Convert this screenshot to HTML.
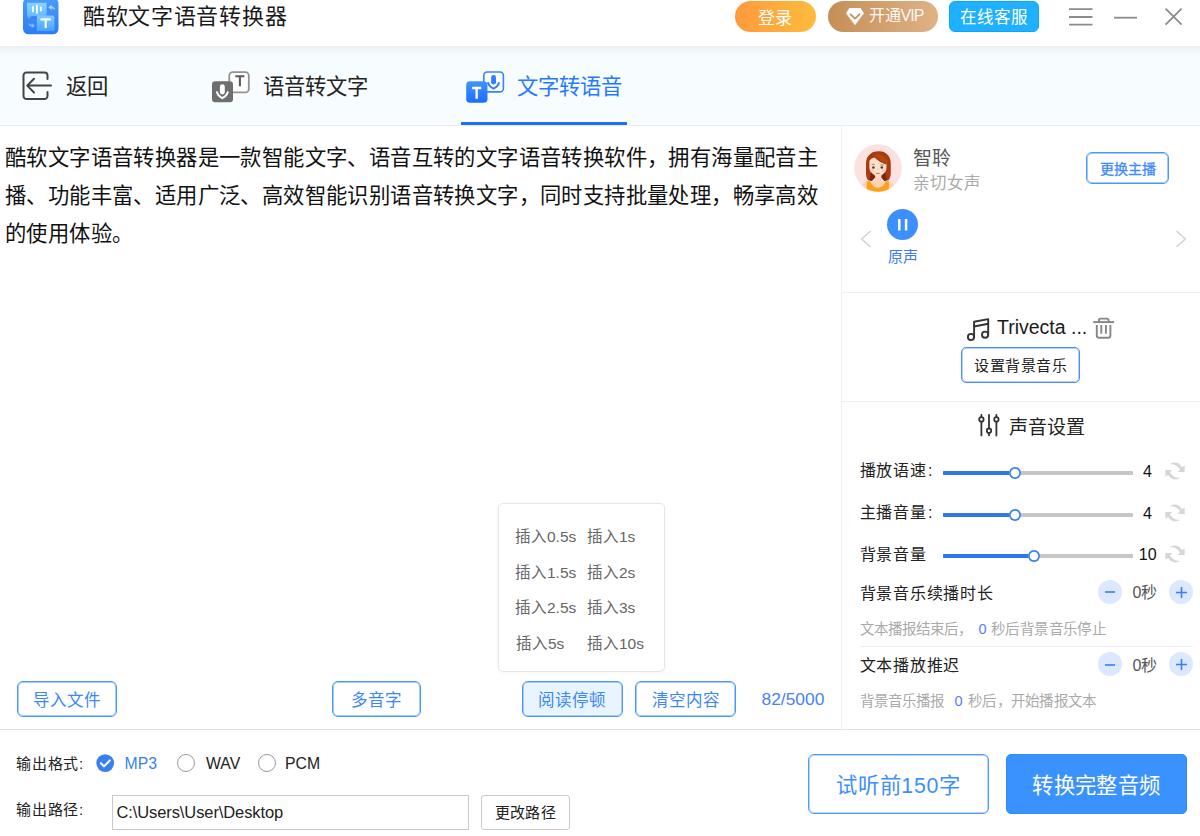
<!DOCTYPE html>
<html lang="zh-CN">
<head>
<meta charset="utf-8">
<title>酷软文字语音转换器</title>
<style>
*{box-sizing:border-box;margin:0;padding:0}
html,body{width:1200px;height:836px;overflow:hidden;background:#fff}
body{position:relative;font-family:"Liberation Sans",sans-serif;color:#222;-webkit-font-smoothing:antialiased}
.a{position:absolute;white-space:nowrap}
.c{display:flex;align-items:center;justify-content:center}
svg{position:absolute;overflow:visible}
/* title bar */
#titlebar{left:0;top:0;width:1200px;height:46px;background:#fff}
#title{left:83px;top:5px;font-size:22px;line-height:24px;letter-spacing:.7px;color:#1a1a1a}
.pill{top:1px;height:31px;border-radius:16px;color:#fff;font-size:17px}
#login{left:735px;width:81px;padding:0 2px 1px 0;background:linear-gradient(90deg,#ff9a3c,#ffbb3c)}
#vip{left:828px;width:110px;background:linear-gradient(90deg,#c58e56,#dfb285)}
#kefu{left:949px;top:1px;width:90px;height:31px;border-radius:6px;background:#1fb1ff;border:1px solid #06a7ff;color:#fff;font-size:16.5px;padding-bottom:2px}
/* tab bar */
#tabbar{left:0;top:46px;width:1200px;height:80px;background:#f7fcfe;border-bottom:1px solid #e8eff3}
#tabshadow{left:0;top:46px;width:1200px;height:10px;background:linear-gradient(180deg,#e9f0f3 0,#eef4f7 20%,#f3f8fb 50%,#f7fcfe 100%)}
.tab{font-size:21.33px;line-height:24px;top:75px;color:#222}
#underline{left:461px;top:122px;width:166px;height:3px;background:#1d6fff}
/* dividers */
#vdiv{left:841px;top:126px;width:1px;height:603px;background:#e9eff4}
.hdiv{height:1px;background:#e9eff4}

/* main text */
#maintext{left:5px;top:139px;width:835px;font-size:21.33px;line-height:38px;color:#111;white-space:nowrap;letter-spacing:.4px}
#popup{left:498px;top:503px;width:167px;height:169px;border:1px solid #e6e6e6;border-radius:5px;background:#fff;box-shadow:0 1px 4px rgba(0,0,0,.04)}
.pi{font-size:15.5px;line-height:20px;color:#666}
.obtn{top:681px;height:36px;border:1px solid #4a96ff;box-shadow:inset 0 0 0 1px rgba(74,150,255,.5);border-radius:6px;background:#fff;color:#3b87fa;font-size:16.5px}
#count{left:761.5px;top:689px;font-size:17.4px;line-height:20px;color:#4a82f0}
#hbot{left:0;top:729px;width:1200px;background:#dfe3e7}

/* right panel */
#vname{left:913px;top:147.5px;font-size:19px;line-height:22px;color:#555}
#vdesc{left:913px;top:173px;font-size:16.5px;line-height:20px;color:#aaa}
#chg{left:1086px;top:152px;width:83px;height:32px;border:1px solid #4a95ff;box-shadow:inset 0 0 0 1px rgba(74,149,255,.5);border-radius:6px;color:#3d8bff;font-size:14px;-webkit-text-stroke:.3px #3d8bff;background:#fff;padding-bottom:1px}
#pause{left:887px;top:209px;width:31px;height:31px;border-radius:50%;background:#3d8eff}
#orig{left:887px;top:247px;width:31px;text-align:center;font-size:15px;line-height:20px;color:#3a78f5}
#mname{left:997px;top:315px;font-size:19.5px;line-height:24px;color:#1a1a1a}
#setbgm{left:961px;top:347px;width:119px;height:36px;border:1px solid #4a8cff;box-shadow:inset 0 0 0 1px rgba(74,140,255,.4);border-radius:5px;background:#fff;color:#222;font-size:15px;letter-spacing:.5px;padding:0 0 2px .5px}
#stitle{left:1008.5px;top:416.5px;font-size:19px;line-height:22px;color:#222}
.rl{left:859.5px;font-size:16px;line-height:20px;letter-spacing:.75px;color:#222}
.trk{left:943px;width:190px;height:4px;border-radius:1px;background:#c6c6c6}
.trkb{left:943px;height:4px;border-radius:1px;background:#2f76ea}
.knob{width:12px;height:12px;border-radius:50%;background:#fff;box-shadow:inset 0 0 0 1.700px #3a7ff0}
.val{font-size:16px;line-height:20px;color:#111}
.circ{width:24px;height:24px;border-radius:50%;background:#dbe8ff}
.sec{left:1132.5px;font-size:16px;line-height:20px;color:#555}
.hint{left:859.5px;font-size:14.5px;line-height:18px;color:#aaa}
.hint b{font-weight:normal;color:#5b7cff}

/* bottom */
.bl{left:16px;font-size:15px;line-height:20px;letter-spacing:.75px;color:#222}
.rad{width:18px;height:18px;border-radius:50%;border:1.500px solid #9a9a9a;background:#fff}
.rt{font-size:15.800px;line-height:20px;color:#222}
#path{left:112px;top:794.500px;width:357px;height:35px;border:1px solid #c9c9c9;background:#fff}
#pathtxt{left:116.500px;top:801.500px;font-size:16.500px;letter-spacing:-.1px;line-height:20px;color:#222}
#chgpath{left:481px;top:794.500px;width:89px;height:35px;border:1px solid #ccc;border-radius:3px;background:#fff;font-size:15px;letter-spacing:.45px;color:#222;padding:0 0 2px 0}
#try{left:808px;top:753.500px;width:181px;height:60px;border:1px solid #4c9aff;box-shadow:inset 0 0 0 1px rgba(76,154,255,.4);border-radius:6px;background:#fff;color:#3d8eff;font-size:21.330px;letter-spacing:.65px;padding-bottom:1px}
#conv{left:1006px;top:753.500px;width:181px;height:60px;border-radius:5px;background:#3a92ff;border:1px solid #2c8bff;color:#fff;font-size:21.330px;letter-spacing:.4px;padding-bottom:1px}
</style>
</head>
<body>
<!-- ===== TITLE BAR ===== -->
<div id="titlebar" class="a"></div>
<svg id="logo" style="left:23px;top:-2px" width="36" height="37" viewBox="0 0 36 37">
  <defs>
    <linearGradient id="lg1" x1="0" y1="0" x2="0" y2="1"><stop offset="0" stop-color="#4a9cfc"/><stop offset="1" stop-color="#2f7af8"/></linearGradient>
    <linearGradient id="lg2" x1="0" y1="0" x2="0" y2="1"><stop offset="0" stop-color="#8ad4ff"/><stop offset="1" stop-color="#5cb4fd"/></linearGradient>
    <linearGradient id="lg3" x1="0" y1="0" x2="0" y2="1"><stop offset="0" stop-color="#7fcbff"/><stop offset="1" stop-color="#4aa3fc"/></linearGradient>
  </defs>
  <rect x="0" y="0" width="35.5" height="36.3" rx="5.5" fill="url(#lg1)"/>
  <path d="M4 4.700h19.600v13.600H8l-2.800 2.600-.2-2.600H4z" fill="url(#lg2)"/>
  <rect x="9" y="8" width="1.8" height="6.4" rx=".9" fill="#fff"/>
  <rect x="13" y="6.6" width="1.8" height="9.4" rx=".9" fill="#fff"/>
  <rect x="17" y="8.4" width="1.8" height="5" rx=".9" fill="#fff"/>
  <rect x="13.8" y="17.4" width="17.6" height="15.6" rx="1.6" fill="url(#lg3)"/>
  <path d="M18.300 21.400h8.800M22.700 21.400v7.900" stroke="#fff" stroke-width="2.100" fill="none" stroke-linecap="round"/>
  <path d="M25.300 9.300l3.300-2.500v1.600c2.100 .2 3.300 1.500 3.500 3.700-1-1.200-2-1.700-3.500-1.700v1.500z" fill="#a5d8ff"/>
  <path d="M12 27.700l-3.300 2.500v-1.600c-2.100-.2-3.300-1.500-3.500-3.700 1 1.200 2 1.700 3.500 1.700v-1.500z" fill="#7cc0ff"/><path d="M7.600 18.300h6.200v3.400z" fill="#2f74ea" opacity=".55"/>
</svg>
<div id="title" class="a">酷软文字语音转换器</div>
<div id="login" class="a c pill">登录</div>
<div id="vip" class="a pill"></div>
<svg style="left:845.5px;top:7.8px" width="18" height="17.2" viewBox="0 0 18 17.2"><path d="M3.4 0h11.2L18 5.300 9 17.200 0 5.300z" fill="#fff"/><path d="M4.600 6.300l4.400 4.400 4.400-4.400" fill="none" stroke="#c9925b" stroke-width="1.800" stroke-linecap="round" stroke-linejoin="round"/></svg>
<div class="a" style="left:868.5px;top:0;height:31px;line-height:31px;font-size:16px;color:#fff;opacity:.92">开通<span style="letter-spacing:-.9px">VIP</span></div>
<div id="kefu" class="a c">在线客服</div>
<svg style="left:1069px;top:8px" width="24" height="18" viewBox="0 0 24 18"><path d="M0 1.200h23.500M0 9h23.500M0 16.700h23.500" stroke="#8c8c8c" stroke-width="1.800"/></svg>
<svg style="left:1114px;top:16px" width="23" height="3" viewBox="0 0 23 3"><path d="M0 1.700h23" stroke="#8c8c8c" stroke-width="1.800"/></svg>
<svg style="left:1165px;top:8px" width="17" height="17" viewBox="0 0 17 17"><path d="M.6.600l16 16M16.600.600l-16 16" stroke="#8c8c8c" stroke-width="1.800"/></svg>

<!-- ===== TAB BAR ===== -->
<div id="tabbar" class="a"></div>
<div id="tabshadow" class="a"></div>
<svg style="left:22px;top:71px" width="31" height="30" viewBox="0 0 31 30"><path d="M25.500 8V4.500a3 3 0 0 0-3-3H4.500a3 3 0 0 0-3 3v20.500a3 3 0 0 0 3 3h18a3 3 0 0 0 3-3V21" fill="none" stroke="#444" stroke-width="2" stroke-linecap="round"/><path d="M29 14.600H5.500M12 7.700L5.200 14.600 12 21.500" fill="none" stroke="#444" stroke-width="2" stroke-linecap="round" stroke-linejoin="round"/></svg>
<div class="a tab" style="left:66px">返回</div>
<!-- speech->text icon -->
<svg style="left:211px;top:70px" width="40" height="34" viewBox="0 0 40 34">
  <rect x="18.300" y="2.100" width="19.500" height="20.300" rx="3.400" fill="#fff" stroke="#939393" stroke-width="1.800"/>
  <path d="M24.300 6.200h9.100M28.900 6.200v10.100" stroke="#5a5a5a" stroke-width="2.100" fill="none"/>
  <rect x="1" y="11.300" width="21" height="21" rx="3.200" fill="#6e6e6e"/>
  <rect x="8.900" y="14.300" width="4.900" height="10.200" rx="2.450" fill="#fff"/>
  <path d="M5.900 22.300Q7.200 26.300 11.350 28.200Q15.500 26.300 16.800 22.300" fill="none" stroke="#fff" stroke-width="2" stroke-linecap="round" stroke-linejoin="round"/>
</svg>
<div class="a tab" style="left:263px">语音转文字</div>
<!-- text->speech icon (active) -->
<svg style="left:465px;top:70px" width="40" height="34" viewBox="0 0 40 34">
  <defs><linearGradient id="tg" x1="0" y1="0" x2="0" y2="1"><stop offset="0" stop-color="#4593ff"/><stop offset="1" stop-color="#1c6dff"/></linearGradient></defs>
  <rect x="18.800" y="2" width="19.600" height="19.900" rx="3.400" fill="#fff" stroke="#3683ff" stroke-width="1.600"/>
  <rect x="26.100" y="5" width="4.900" height="9.600" rx="2.450" fill="#2f80ff"/>
  <path d="M23.100 13Q24.400 16.800 28.500 18.600Q32.600 16.800 33.900 13" fill="none" stroke="#2f7dff" stroke-width="2" stroke-linecap="round" stroke-linejoin="round"/>
  <rect x="1.200" y="11.200" width="21.300" height="21.600" rx="3.800" fill="url(#tg)"/>
  <path d="M7.100 18h9.100M11.650 18v10.700" stroke="#fff" stroke-width="2.400" fill="none"/>
</svg>
<div class="a tab" style="left:517px;color:#2878ff">文字转语音</div>
<div id="underline" class="a"></div>

<!-- ===== MAIN ===== -->
<div id="vdiv" class="a"></div>

<div id="maintext" class="a">酷软文字语音转换器是一款智能文字、语音互转的文字语音转换软件，拥有海量配音主<br>播、功能丰富、适用广泛、高效智能识别语音转换文字，同时支持批量处理，畅享高效<br>的使用体验。</div>
<div id="popup" class="a"></div>
<div class="a pi" style="left:515px;top:527px">插入0.5s</div><div class="a pi" style="left:587px;top:527px">插入1s</div>
<div class="a pi" style="left:515px;top:562.5px">插入1.5s</div><div class="a pi" style="left:587px;top:562.5px">插入2s</div>
<div class="a pi" style="left:515px;top:598px">插入2.5s</div><div class="a pi" style="left:587px;top:598px">插入3s</div>
<div class="a pi" style="left:516px;top:633.5px">插入5s</div><div class="a pi" style="left:587px;top:633.5px">插入10s</div>
<div class="a c obtn" style="left:17px;width:100px">导入文件</div>
<div class="a c obtn" style="left:332px;width:89px">多音字</div>
<div class="a c obtn" style="left:522px;width:101px;background:#e8f4ff;box-shadow:inset 0 0 0 1px rgba(74,150,255,.5),inset 0 0 0 2px #f4faff;padding-right:1px">阅读停顿</div>
<div class="a c obtn" style="left:635px;width:101px">清空内容</div>
<div id="count" class="a">82/5000</div>
<div id="hbot" class="a hdiv"></div>

<!-- voice card -->
<svg id="avatar" style="left:853.500px;top:143.500px" width="48" height="48" viewBox="0 0 48 48">
  <defs><clipPath id="avc"><circle cx="24" cy="24" r="23.800"/></clipPath></defs>
  <circle cx="24" cy="24" r="23.800" fill="#fde1e1"/>
  <g clip-path="url(#avc)">
    <path d="M7.500 44c.5-4 3-6.300 7-6.800h19c4 .5 6.500 2.800 7 6.800l1 5h-35z" fill="#fbd3b0"/>
    <path d="M24.600 7.200c-7.600 0-12.600 4.800-12.600 12.600v9.200c0 3 .6 5.300 2 7.200l3.200 .6 2.800-3h8.400l2.800 3 3.200-.6c1.600-1.900 2.400-4.200 2.400-7.200v-9.200c0-7.800-4.600-12.600-12.200-12.600z" fill="#a83b11"/>
    <path d="M17.200 27.500l-1.800 8.700 2.600 .7 3.400-4zM31 27.500l1.800 8.700-2.600 .7-3.400-4z" fill="#7c250b"/>
    <path d="M21.200 30h6.200v8c0 1.800-1.400 3-3.100 3s-3.100-1.200-3.100-3z" fill="#fbd5b8"/>
    <path d="M15.400 17.500c0-2.300 3.400-4.300 8.600-4.300 4.800 0 8.500 2 8.500 4.300v6.300c0 2.700-1.500 4.800-3.700 6.500l-3 2.100c-1.100 .7-2.300 .7-3.400 0l-3-2.100c-2.400-1.700-4-3.800-4-6.500z" fill="#fde0cc"/>
    <path d="M13.800 21.500c.6-5.300 2.600-8.100 5.600-9.400 3.300 4.200 8.400 7.500 14.400 8.700l.6-6.800L28 7.700l-9 .6-5.600 5.500z" fill="#a83b11"/>
    <path d="M21 10c2.300 4.600 7 8.600 13 10.400 .5-6-4.200-10.400-13-10.400z" fill="#b9450f"/>
    <circle cx="19.400" cy="23.400" r="1.250" fill="#3d3a3a"/><circle cx="27.800" cy="23.400" r="1.250" fill="#3d3a3a"/>
    <path d="M17.600 20.700q1.600-.9 3.200-.3M26.400 21q1.600-.4 3.200 .4" stroke="#8a4a2a" stroke-width=".7" fill="none"/>
    <circle cx="17.900" cy="26.600" r="1.500" fill="#f8b8a8" opacity=".8"/><circle cx="29.900" cy="26.600" r="1.500" fill="#f8b8a8" opacity=".8"/>
    <path d="M21.800 29.400h3.800" stroke="#c98a6a" stroke-width="1.200"/>
    <path d="M23.800 24.400v1.800" stroke="#f5b79a" stroke-width=".9"/>
    <path d="M12.700 37.300h3.800c1 4.300 4 6.500 7.500 6.500s6.500-2.200 7.500-6.500h3.400V49h-22.200z" fill="#ff9f1c"/>
  </g>
</svg>
<div id="vname" class="a">智聆</div>
<div id="vdesc" class="a">亲切女声</div>
<div id="chg" class="a c">更换主播</div>
<svg style="left:860px;top:230px" width="12" height="18" viewBox="0 0 12 18"><path d="M10.500 1L1.700 9l8.800 8" fill="none" stroke="#d2d2d2" stroke-width="1.500"/></svg>
<svg style="left:1175px;top:230px" width="12" height="18" viewBox="0 0 12 18"><path d="M1.500 1l8.800 8-8.800 8" fill="none" stroke="#d2d2d2" stroke-width="1.500"/></svg>
<div id="pause" class="a"></div>
<svg style="left:898px;top:219px" width="10" height="12" viewBox="0 0 10 12"><path d="M1.250 0v11.600M8.100 0v11.600" stroke="#fff" stroke-width="2.500"/></svg>
<div id="orig" class="a">原声</div>
<div class="a hdiv" style="left:842px;top:292px;width:358px"></div>
<!-- bg music -->
<svg style="left:966px;top:317px" width="25" height="25" viewBox="0 0 25 25"><g fill="none" stroke="#333" stroke-width="1.900" stroke-linejoin="round" stroke-linecap="round"><path d="M8.100 19.600V4.800L22.200 2.100v15.200"/><path d="M8.100 9.500L22.200 6.800"/><circle cx="5" cy="20" r="3.100"/><circle cx="19.100" cy="17.700" r="3.100"/></g></svg>
<div id="mname" class="a">Trivecta ...</div>
<svg style="left:1093px;top:317px" width="22" height="22" viewBox="0 0 22 22"><g fill="none" stroke="#868686" stroke-width="1.900"><path d="M.2 5.100h20.900"/><path d="M5.950 5.100V3.200Q5.950 1.650 7.500 1.650H14Q15.550 1.650 15.550 3.200V5.100"/><path d="M3.800 7.900V18.500Q3.800 20.700 6 20.700H15.200Q17.400 20.700 17.400 18.500V7.900"/><path d="M8.300 7.900v8.900M12.900 7.900v8.900"/></g></svg>
<div id="setbgm" class="a c">设置背景音乐</div>
<div class="a hdiv" style="left:842px;top:401px;width:358px"></div>
<!-- sound settings -->
<svg style="left:978px;top:414px" width="22" height="22" viewBox="0 0 22 22"><g fill="#fff" stroke="#333" stroke-width="1.800" stroke-linecap="round"><path d="M3.400 .8v20.600M11 .8v20.600M18.400 .8v20.600"/><circle cx="3.400" cy="5.400" r="2.200"/><circle cx="11" cy="16.700" r="2.200"/><circle cx="18.400" cy="5.400" r="2.200"/></g></svg>
<div id="stitle" class="a">声音设置</div>

<div class="a rl" style="top:461px">播放语速<span style="margin-left:1.5px">:</span></div>
<div class="a trk" style="top:470.700px"></div><div class="a trkb" style="top:470.700px;width:72px"></div><div class="a knob" style="left:1009.400px;top:466.800px"></div>
<div class="a val" style="left:1143px;top:462px">4</div>
<svg style="left:1165.100px;top:461.9px" width="20" height="18" viewBox="-10 -9 20 18"><g fill="#d7d7d7"><path id="ra462" d="M-5.200-6.700C-2-9.400 3.800-9.200 6.900-4L9.700-5.600V1H2.800L5-1.500C2.600-5.600-1.400-7.300-5.200-6.700Z"/><use href="#ra462" transform="rotate(180)"/></g></svg>
<div class="a rl" style="top:503px">主播音量<span style="margin-left:1.5px">:</span></div>
<div class="a trk" style="top:512.500px"></div><div class="a trkb" style="top:512.500px;width:72px"></div><div class="a knob" style="left:1009.400px;top:508.600px"></div>
<div class="a val" style="left:1143px;top:504px">4</div>
<svg style="left:1165.100px;top:503.7px" width="20" height="18" viewBox="-10 -9 20 18"><g fill="#d7d7d7"><path id="ra504" d="M-5.200-6.700C-2-9.400 3.800-9.200 6.900-4L9.700-5.600V1H2.800L5-1.500C2.600-5.600-1.400-7.300-5.200-6.700Z"/><use href="#ra504" transform="rotate(180)"/></g></svg>
<div class="a rl" style="top:544.500px">背景音量</div>
<div class="a trk" style="top:554px"></div><div class="a trkb" style="top:554px;width:90px"></div><div class="a knob" style="left:1027.500px;top:550.100px"></div>
<div class="a val" style="left:1138.800px;top:545px">10</div>
<svg style="left:1165.100px;top:545.3px" width="20" height="18" viewBox="-10 -9 20 18"><g fill="#d7d7d7"><path id="ra545" d="M-5.200-6.700C-2-9.400 3.800-9.200 6.900-4L9.700-5.600V1H2.800L5-1.500C2.600-5.600-1.400-7.300-5.200-6.700Z"/><use href="#ra545" transform="rotate(180)"/></g></svg>
<div class="a rl" style="top:583.500px">背景音乐续播时长</div>
<div class="a circ" style="left:1097.700px;top:580px"></div><svg style="left:1104.700px;top:591px" width="10" height="2" viewBox="0 0 10 2"><path d="M0 1h10" stroke="#3a7ef5" stroke-width="1.600"/></svg><div class="a sec" style="top:583px">0秒</div><div class="a circ" style="left:1168.800px;top:580px"></div><svg style="left:1175.800px;top:587px" width="11" height="11" viewBox="0 0 11 11"><path d="M0 5.500h11M5.500 0v11" stroke="#3a7ef5" stroke-width="1.600"/></svg>
<div class="a hint" style="top:620px">文本播报结束后，</div><div class="a hint" style="top:620px;left:978.600px"><b>0</b></div><div class="a hint" style="top:620px;left:991px;letter-spacing:.4px">秒后背景音乐停止</div>
<div class="a hdiv" style="left:860px;top:646px;width:333px"></div>
<div class="a rl" style="top:655.500px">文本播放推迟</div>
<div class="a circ" style="left:1097.700px;top:652px"></div><svg style="left:1104.700px;top:664px" width="10" height="2" viewBox="0 0 10 2"><path d="M0 1h10" stroke="#3a7ef5" stroke-width="1.600"/></svg><div class="a sec" style="top:655.500px">0秒</div><div class="a circ" style="left:1168.800px;top:652px"></div><svg style="left:1175.800px;top:659px" width="11" height="11" viewBox="0 0 11 11"><path d="M0 5.500h11M5.500 0v11" stroke="#3a7ef5" stroke-width="1.600"/></svg>
<div class="a hint" style="top:692px">背景音乐播报</div><div class="a hint" style="top:692px;left:954.500px"><b>0</b></div><div class="a hint" style="top:692px;left:968px;letter-spacing:.25px">秒后，开始播报文本</div>

<div class="a bl" style="top:754px">输出格式:</div>
<svg style="left:96px;top:754px" width="19" height="19" viewBox="0 0 19 19"><circle cx="9.200" cy="9.100" r="8.900" fill="#3a7ff0"/><path d="M4.900 9.300l3.100 3.100 5.900-6" fill="none" stroke="#fff" stroke-width="2" stroke-linecap="round" stroke-linejoin="round"/></svg>
<div class="a rt" style="left:124.500px;top:753.500px;color:#3a7ff0">MP3</div>
<div class="a rad" style="left:177px;top:754px"></div>
<div class="a rt" style="left:206px;top:753.500px">WAV</div>
<div class="a rad" style="left:257.500px;top:754px"></div>
<div class="a rt" style="left:285px;top:753.500px">PCM</div>
<div class="a bl" style="top:800px">输出路径:</div>
<div id="path" class="a"></div>
<div id="pathtxt" class="a">C:\Users\User\Desktop</div>
<div id="chgpath" class="a c">更改路径</div>
<div id="try" class="a c">试听前150字</div>
<div id="conv" class="a c">转换完整音频</div>

</body>
</html>
